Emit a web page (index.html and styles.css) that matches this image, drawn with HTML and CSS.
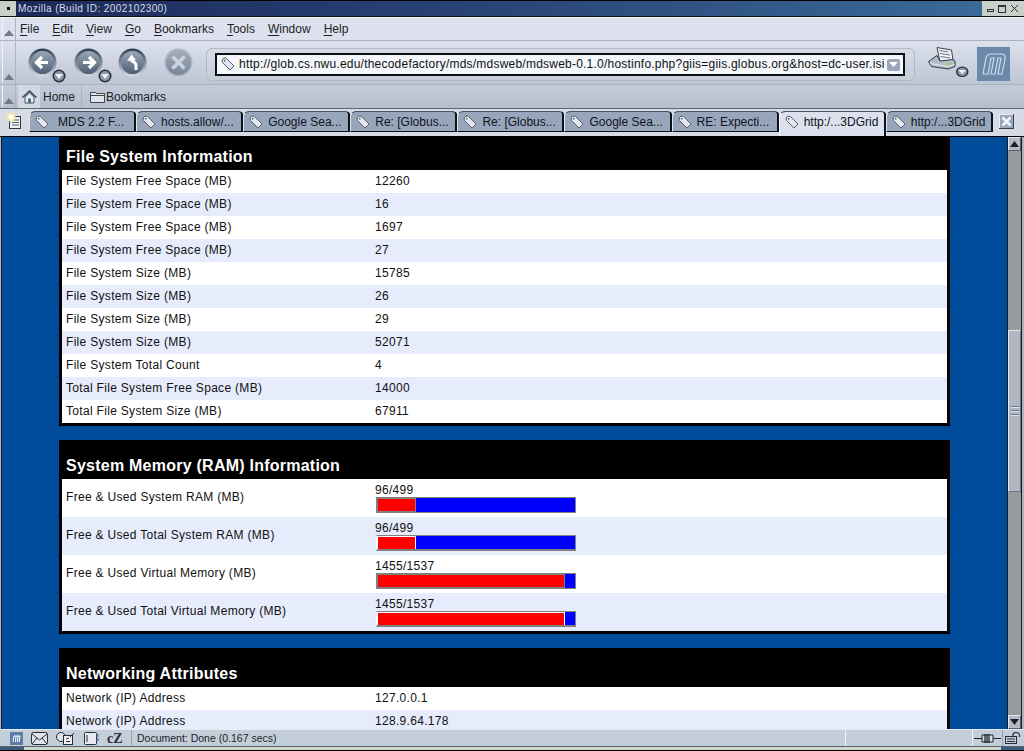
FILE: index.html
```html
<!DOCTYPE html>
<html lang="en">
<head>
<meta charset="utf-8">
<title>Mozilla (Build ID: 2002102300)</title>
<link rel="stylesheet" href="styles.css">
</head>
<body>
<svg class="defs" width="0" height="0" aria-hidden="true">
  <defs>
    <linearGradient id="ball" x1="0" y1="0" x2="0" y2="1"><stop offset="0" stop-color="#9aa7b8"/><stop offset="1" stop-color="#4e5e74"/></linearGradient>
    <linearGradient id="ballRim" x1="0" y1="0" x2="0" y2="1"><stop offset="0" stop-color="#2f3c50"/><stop offset="1" stop-color="#d5dbe5"/></linearGradient>
    <linearGradient id="stopBall" x1="0" y1="0" x2="0" y2="1"><stop offset="0" stop-color="#a3aebd"/><stop offset="1" stop-color="#77869a"/></linearGradient>
    <symbol id="tag" viewBox="0 0 14 14"><path d="M1 3 3 1 5.500 1.500 13 9 9 13 1.500 5.500Z" fill="#e4e7ee" stroke="#59606c"/><circle cx="3.700" cy="3.700" r=".9" fill="#59606c"/></symbol>
    <symbol id="drop" viewBox="0 0 14 14"><circle cx="7" cy="7" r="6.500" fill="#29303c"/><circle cx="7" cy="7" r="5" fill="#8b97a8"/><path d="M3 5h8L7 10Z" fill="#eef1f6"/></symbol>
    <symbol id="grip" viewBox="0 0 10 6"><path d="M0 6 5 0 10 6Z" fill="#6f7a8a"/></symbol>
  </defs>
</svg>
<div class="window">
  <header class="titlebar">
    <div class="winmenu"><span class="winmenu-dot"></span></div>
    <div class="title">Mozilla (Build ID: 2002102300)</div>
    <div class="winbtns">
      <span class="wb-min"></span><span class="wb-max"></span>
      <svg class="wb-x" width="9" height="9" viewBox="0 0 9 9"><path d="M1 1 8 8M8 1 1 8" stroke="#2c3340" fill="none"/></svg>
    </div>
  </header>

  <nav class="menubar">
    <div class="grip"><svg width="10" height="6"><use href="#grip"/></svg></div>
    <span class="menu"><u>F</u>ile</span>
    <span class="menu"><u>E</u>dit</span>
    <span class="menu"><u>V</u>iew</span>
    <span class="menu"><u>G</u>o</span>
    <span class="menu"><u>B</u>ookmarks</span>
    <span class="menu"><u>T</u>ools</span>
    <span class="menu"><u>W</u>indow</span>
    <span class="menu"><u>H</u>elp</span>
  </nav>

  <div class="navbar">
    <div class="grip"><svg width="10" height="6"><use href="#grip"/></svg></div>
    <div class="navbtns">
      <div class="navbtn">
        <svg width="29" height="29" viewBox="0 0 29 29"><circle cx="14.500" cy="14.500" r="14" fill="url(#ballRim)"/><circle cx="14.500" cy="14.500" r="11.500" fill="url(#ball)"/><path d="M20 14.500H10M14 9 8.500 14.500 14 20" stroke="#fff" stroke-width="3.200" fill="none"/></svg>
        <svg class="dropmark" width="14" height="14"><use href="#drop"/></svg>
      </div>
      <div class="navbtn">
        <svg width="29" height="29" viewBox="0 0 29 29"><circle cx="14.500" cy="14.500" r="14" fill="url(#ballRim)"/><circle cx="14.500" cy="14.500" r="11.500" fill="url(#ball)"/><path d="M9 14.500H19M15 9 20.500 14.500 15 20" stroke="#fff" stroke-width="3.200" fill="none"/></svg>
        <svg class="dropmark" width="14" height="14"><use href="#drop"/></svg>
      </div>
      <div class="navbtn navbtn-plain">
        <svg width="29" height="29" viewBox="0 0 29 29"><circle cx="14.500" cy="14.500" r="14" fill="url(#ballRim)"/><circle cx="14.500" cy="14.500" r="11.500" fill="url(#ball)"/><path d="M18 22V17.500Q18 14.500 14 13V11" stroke="#fff" stroke-width="3" fill="none"/><path d="M9 13 13.500 6.500 18 12Z" fill="#fff"/></svg>
      </div>
      <div class="navbtn navbtn-plain">
        <svg width="29" height="29" viewBox="0 0 29 29"><circle cx="14.500" cy="14.500" r="14" fill="#adb6c4"/><circle cx="14.500" cy="14.500" r="12.500" fill="url(#stopBall)"/><path d="M8.500 8.500 20.500 20.500M20.500 8.500 8.500 20.500" stroke="#cdd3dd" stroke-width="3.800"/></svg>
      </div>
    </div>
    <div class="urlframe">
      <div class="urlbox">
        <svg class="urlicon" width="14" height="14"><use href="#tag"/></svg>
        <span class="urltext">http://glob.cs.nwu.edu/thecodefactory/mds/mdsweb/mdsweb-0.1.0/hostinfo.php?giis=giis.globus.org&amp;host=dc-user.isi</span>
        <span class="urldrop"><svg width="9" height="5" viewBox="0 0 9 5"><path d="M0 0H9L4.500 5Z" fill="#fff"/></svg></span>
      </div>
    </div>
    <div class="printbtn">
      <svg width="42" height="32" viewBox="0 0 42 32"><path d="M10 1.500 24.500 4 26 14 13 16Z" fill="#f2f4f7" stroke="#39414e"/><path d="M12.500 4.500 21.500 6M13 7.500 23 9M13.500 10.500 23.500 12" stroke="#6d7685"/><path d="M1.500 15.500 10 9.500 13 15 26 13.500 28 15 28 20.500 21 23 4.500 20.500Z" fill="#b4bcc9" stroke="#303845"/><path d="M3 17.500 21 20.500 27.500 18.500" fill="none" stroke="#e8ebf1"/><path d="M20 17.500 25 16.500 25 18.500 20 19.500Z" fill="#8fcf6d"/><svg x="28.500" y="20" width="13.500" height="11.500" viewBox="0 0 14 14" preserveAspectRatio="none"><circle cx="7" cy="7" r="6.500" fill="#29303c"/><circle cx="7" cy="7" r="5" fill="#8b97a8"/><path d="M3 5h8L7 10Z" fill="#eef1f6"/></svg></svg>
    </div>
    <div class="mlogo">
      <svg width="33" height="34" viewBox="0 0 33 34"><rect width="33" height="34" fill="#6d89aa"/><path d="M6 27 9 11Q10 7 14 7H24Q29 7 28 12L25 27H21L24 11H21L18 27H14L17 11H14L11 27Z" fill="none" stroke="#c6dcef" stroke-width="1.200"/></svg>
    </div>
  </div>

  <div class="personal">
    <div class="grip"><svg width="10" height="6"><use href="#grip"/></svg></div>
    <div class="pbtn pbtn-home">
      <svg width="15" height="14" viewBox="0 0 15 14"><path d="M.5 7.500 7.500 1 14.500 7.500" fill="none" stroke="#39465a" stroke-width="1.500"/><path d="M3 7 7.500 3 12 7V13H3Z" fill="#e8ebf1" stroke="#46536a"/><rect x="6" y="8.500" width="3" height="4.500" fill="#4f7486"/></svg>
      <span>Home</span>
    </div>
    <div class="pbtn pbtn-marks">
      <svg width="15" height="13" viewBox="0 0 15 13"><path d="M.5 2.500H5.500L6.500 3.500H14.500V12.500H.5Z" fill="#dfe3ea" stroke="#3f4654"/><path d="M.5 5.500H14.500" stroke="#3f4654"/></svg>
      <span>Bookmarks</span>
    </div>
  </div>

  <div class="tabbar">
    <div class="newtab">
      <svg width="18" height="18" viewBox="0 0 18 18"><rect x="4.500" y="4.500" width="11" height="12" fill="#eef0f4" stroke="#2f3642"/><path d="M7 8h7M7 10.500h7M7 13h7" stroke="#59606c"/><circle cx="6" cy="5" r="4.500" fill="#f4e79c"/><circle cx="6" cy="5" r="2.500" fill="#fff"/></svg>
    </div>
    <div class="tabs">
      <div class="tab"><svg width="14" height="14"><use href="#tag"/></svg><span class="tablabel-wide">MDS 2.2 F...</span></div>
      <div class="tab"><svg width="14" height="14"><use href="#tag"/></svg><span>hosts.allow/...</span></div>
      <div class="tab"><svg width="14" height="14"><use href="#tag"/></svg><span>Google Sea...</span></div>
      <div class="tab"><svg width="14" height="14"><use href="#tag"/></svg><span>Re: [Globus...</span></div>
      <div class="tab"><svg width="14" height="14"><use href="#tag"/></svg><span>Re: [Globus...</span></div>
      <div class="tab"><svg width="14" height="14"><use href="#tag"/></svg><span>Google Sea...</span></div>
      <div class="tab"><svg width="14" height="14"><use href="#tag"/></svg><span>RE: Expecti...</span></div>
      <div class="tab tab-active"><svg width="14" height="14"><use href="#tag"/></svg><span>http:/...3DGrid</span></div>
      <div class="tab"><svg width="14" height="14"><use href="#tag"/></svg><span>http:/...3DGrid</span></div>
    </div>
    <div class="tabclose">
      <svg width="15" height="15" viewBox="0 0 15 15"><rect width="15" height="15" fill="#98a6bc"/><path d="M0 .5H15M.5 0V15" stroke="#e8ebf1"/><path d="M14.500 0V15M0 14.500H15" stroke="#3c4450"/><path d="M3.500 3.500 11.500 11.500M11.500 3.500 3.500 11.500" stroke="#f2f4f8" stroke-width="2.600"/></svg>
    </div>
  </div>

  <div class="viewport">
    <main class="page">
      <div class="pagecol">
        <section class="panel">
          <h2 class="panel-head">File System Information</h2>
          <div class="row"><div class="k">File System Free Space (MB)</div><div class="v">12260</div></div>
          <div class="row"><div class="k">File System Free Space (MB)</div><div class="v">16</div></div>
          <div class="row"><div class="k">File System Free Space (MB)</div><div class="v">1697</div></div>
          <div class="row"><div class="k">File System Free Space (MB)</div><div class="v">27</div></div>
          <div class="row"><div class="k">File System Size (MB)</div><div class="v">15785</div></div>
          <div class="row"><div class="k">File System Size (MB)</div><div class="v">26</div></div>
          <div class="row"><div class="k">File System Size (MB)</div><div class="v">29</div></div>
          <div class="row"><div class="k">File System Size (MB)</div><div class="v">52071</div></div>
          <div class="row"><div class="k">File System Total Count</div><div class="v">4</div></div>
          <div class="row"><div class="k">Total File System Free Space (MB)</div><div class="v">14000</div></div>
          <div class="row"><div class="k">Total File System Size (MB)</div><div class="v">67911</div></div>
        </section>
        <section class="panel">
          <h2 class="panel-head">System Memory (RAM) Information</h2>
          <div class="row row-bar"><div class="k">Free &amp; Used System RAM (MB)</div><div class="v"><div class="barlabel">96/499</div><div class="bar bar-a"><div class="used" style="width:39px"></div><div class="free"></div></div></div></div>
          <div class="row row-bar"><div class="k">Free &amp; Used Total System RAM (MB)</div><div class="v"><div class="barlabel">96/499</div><div class="bar bar-b"><div class="used" style="width:39px"></div><div class="free"></div></div></div></div>
          <div class="row row-bar"><div class="k">Free &amp; Used Virtual Memory (MB)</div><div class="v"><div class="barlabel">1455/1537</div><div class="bar bar-a"><div class="used" style="width:188px"></div><div class="free"></div></div></div></div>
          <div class="row row-bar"><div class="k">Free &amp; Used Total Virtual Memory (MB)</div><div class="v"><div class="barlabel">1455/1537</div><div class="bar bar-b"><div class="used" style="width:188px"></div><div class="free"></div></div></div></div>
        </section>
        <section class="panel">
          <h2 class="panel-head">Networking Attributes</h2>
          <div class="row"><div class="k">Network (IP) Address</div><div class="v">127.0.0.1</div></div>
          <div class="row"><div class="k">Network (IP) Address</div><div class="v">128.9.64.178</div></div>
        </section>
      </div>
    </main>
    <aside class="scrollbar">
      <div class="sb-arrow"><svg width="9" height="6" viewBox="0 0 9 6"><path d="M0 6H9L4.500 0Z" fill="#1b1f27"/></svg></div>
      <div class="sb-track">
        <div class="sb-thumb"><span></span><span></span><span></span></div>
      </div>
      <div class="sb-arrow"><svg width="9" height="6" viewBox="0 0 9 6"><path d="M0 0H9L4.500 6Z" fill="#1b1f27"/></svg></div>
    </aside>
  </div>

  <footer class="statusbar">
    <div class="st-icons">
      <svg width="13" height="13" viewBox="0 0 13 13"><rect width="13" height="13" fill="#5d7ea6"/><path d="M3 10 4 4H10L9 10M6 4 5.500 10M8 4 7.500 10" stroke="#fff" fill="none"/></svg>
      <svg width="17" height="13" viewBox="0 0 17 13"><rect x=".5" y=".5" width="16" height="12" rx="2" fill="#dfe3ea" stroke="#262c37"/><path d="M1 2 8.500 8 16 2M1 12 6 6M16 12 11 6" stroke="#262c37" fill="none"/></svg>
      <svg width="20" height="13" viewBox="0 0 20 13"><circle cx="5" cy="5" r="4.500" fill="#dfe3ea" stroke="#262c37"/><rect x="7.500" y="3.500" width="9" height="9" fill="#eef0f4" stroke="#262c37"/><path d="M10 7l3-1M10 9.500h4M14 5 18 1" stroke="#262c37"/></svg>
      <svg width="15" height="13" viewBox="0 0 15 13"><rect x=".5" y=".5" width="12" height="12" rx="1" fill="#e6e9ef" stroke="#262c37"/><path d="M13.500 2v3M13.500 6v3" stroke="#5d7ea6" stroke-width="2"/><path d="M3 3v7" stroke="#262c37"/></svg>
      <span class="cz">cZ</span>
    </div>
    <div class="st-text">Document: Done (0.167 secs)</div>
    <div class="st-progress"></div>
    <div class="st-online"><svg width="27" height="11" viewBox="0 0 27 11"><path d="M0 5.500H8M19 5.500H27" stroke="#1f242d"/><path d="M8 2H19V9H8Z" fill="#d8dde6" stroke="#1f242d"/><path d="M11 1V10M13 1V10M15 1V10" stroke="#1f242d" stroke-width="1.300"/></svg></div>
    <div class="st-lock"><svg width="17" height="12" viewBox="0 0 17 12"><rect x=".5" y="4.500" width="11" height="7" fill="#c4cdd9" stroke="#262c37"/><path d="M2 7H10M2 9.500H10" stroke="#262c37"/><path d="M8 4V3Q8 .5 11 .5T14.500 3V5" fill="none" stroke="#262c37" stroke-width="1.200"/></svg></div>
  </footer>
  <div class="taskstrip"><span class="task-a"></span><span class="task-b"></span><span class="task-c"></span></div>
</div>
</body>
</html>
```
FILE: styles.css
```css
* { box-sizing: border-box; }
html, body { margin: 0; padding: 0; background: #000; overflow: hidden; }
body { font-family: "Liberation Sans", Arial, sans-serif; font-size: 12px; color: #111; }
.defs { position: absolute; }
.window { width: 1024px; height: 751px; display: flex; flex-direction: column; background: #000; overflow: hidden; }

.titlebar { height: 16px; margin-top: 1px; display: flex; align-items: stretch; background: #c9cfc9; border-bottom: 1px solid #111; flex: none; }
.winmenu { width: 16px; background: #c8cec8; display: flex; align-items: center; justify-content: center; }
.winmenu-dot { width: 3px; height: 3px; background: #111; }
.title { flex: 1; background: linear-gradient(90deg, #1c2a5a 0%, #2a4578 50%, #3a6a97 100%); color: #d9dde4; font-size: 10px; letter-spacing: .42px; padding-left: 2px; line-height: 15px; }
.winbtns { width: 42px; display: flex; align-items: center; gap: 4px; padding-left: 5px; flex: none; }
.wb-min { width: 7px; height: 3px; border: 1px solid #2c3340; margin-top: 4px; }
.wb-max { width: 8px; height: 8px; border: 1px solid #2c3340; border-top-width: 2px; }

.grip { width: 13px; margin-left: 3px; align-self: stretch; display: flex; align-items: flex-end; padding-bottom: 4px; padding-left: 1px; border-right: 1px solid #aab3c0; box-shadow: -2px 0 0 -1px #f2f4f8; flex: none; }

.menubar { height: 24px; flex: none; display: flex; align-items: center; background: #dde1ee; border-top: 1px solid #f2f4fa; border-bottom: 1px solid #a9b2bf; padding-right: 3px; }
.menubar .grip { margin-right: 4px; }
.menu { margin-right: 13px; font-size: 12px; color: #1b1f27; }
.menu u { text-decoration-thickness: 1px; text-underline-offset: 2px; }

.navbar { height: 44px; flex: none; display: flex; align-items: center; background: linear-gradient(#dde1ee, #bdc6d3); border-bottom: 1px solid #a9b2bf; }
.navbar .grip { margin-right: 12px; }
.navbtns { display: flex; gap: 17px; width: 178px; flex: none; }
.navbtn { width: 29px; height: 29px; position: relative; flex: none; }
.navbtn-plain { margin-left: -2px; margin-right: 2px; }
.dropmark { position: absolute; left: 24px; top: 21px; }
.urlframe { width: 709px; height: 33px; flex: none; margin-top: 3px; border: 1px solid #b0b9c6; border-radius: 6px; display: flex; align-items: center; padding-left: 8px; background: linear-gradient(#d6dbe7, #c5cdd9); }
.urlbox { width: 690px; height: 23px; border: 2px solid #0c1016; background: #f3f7fb; display: flex; align-items: center; }
.urlicon { flex: none; margin: 0 4px 0 4px; }
.urltext { flex: 1; overflow: hidden; white-space: nowrap; font-size: 12px; letter-spacing: .22px; color: #111; }
.urldrop { flex: none; width: 13px; height: 12px; margin: 1px 3px 0 1px; border-radius: 2px; background: #9aa7bb; display: flex; align-items: center; justify-content: center; }
.printbtn { width: 42px; height: 32px; flex: none; margin-left: 12px; margin-top: -1px; }
.mlogo { width: 33px; height: 34px; flex: none; margin-left: 8px; margin-top: 3px; }

.personal { height: 24px; flex: none; display: flex; align-items: center; background: linear-gradient(#c3cbd7, #b5bfcc); border-bottom: 1px solid #5d6675; }
.pbtn { display: flex; align-items: center; gap: 6px; font-size: 12px; color: #1b1f27; }
.pbtn-home { padding: 0 6px 0 4px; height: 23px; border-right: 1px solid #a9b2bf; margin-left: 2px; background: linear-gradient(90deg, #d3d9e3 0, #d3d9e3 22px, transparent 22px); }
.pbtn-marks { gap: 1px; margin-left: 8px; }

.tabbar { height: 27px; flex: none; display: flex; align-items: flex-start; background: #d6dbe6; }
.newtab { width: 29px; height: 22px; flex: none; padding: 3px 0 0 5px; }
.tabs { display: grid; grid-template-columns: repeat(9, 107.100px); flex: none; margin-top: 2px; }
.tab { height: 21px; background: #98a6bc; border: 1px solid #0d1118; border-left-color: #e2e6ee; border-top-color: #4a5361; border-radius: 7px 5px 0 0 / 5px 3px 0 0; border-right-width: 2px; display: flex; align-items: center; gap: 5px; padding-left: 5px; white-space: nowrap; color: #10141b; font-size: 12px; overflow: hidden; }
.tab svg { flex: none; }
.tablabel-wide { margin-left: 4px; }
.tab-active { background: #dde1ee; border-bottom: 0; border-left-color: #fff; height: 25px; padding-bottom: 4px; }
.tabclose { width: 15px; height: 15px; flex: none; margin: 5px 0 0 6px; }

.viewport { flex: none; height: 592px; margin-top: 1px; display: flex; background: #004c9b; border-left: 1px solid #aeb4bd; border-right: 2px solid #aeb4bd; overflow: hidden; }
.page { flex: 1; overflow: hidden; border-left: 1px solid #1a1d24; }
.pagecol { width: 891px; margin-left: 57px; margin-top: -6px; display: flex; flex-direction: column; gap: 14px; }
.panel { background: #000; padding: 0 3px 3px 3px; }
.panel-head { margin: 0; height: 39px; padding: 15px 0 0 4px; color: #fff; font-size: 16px; font-weight: bold; line-height: 22px; letter-spacing: .24px; }
.row { display: flex; height: 23px; align-items: center; background: #fff; color: #111; font-size: 12px; letter-spacing: .31px; padding: 0 0 2px 4px; }
.row:nth-child(odd) { background: #e6ecfc; }
.row-bar { height: 38px; padding-bottom: 0; }
.k { width: 309px; flex: none; }
.v { flex: 1; }
.row-bar .k { position: relative; top: -1px; }
.barlabel { line-height: 13px; margin-top: 1px; }
.bar { width: 200px; height: 16px; display: flex; border: 1px solid #808080; margin-left: 1px; }
.bar .used { border: 1px solid #808080; background: #f00; }
.bar .free { flex: 1; background: #00f; }
.bar-b { border-left-color: #fff; border-bottom-width: 2px; }
.bar-b .used { border-color: #fff; border-bottom-width: 0; }

.scrollbar { width: 15px; flex: none; display: flex; flex-direction: column; background: #999a9e; border-left: 1px solid #1a1d24; border-right: 1px solid #1a1d24; }
.sb-arrow { height: 14px; flex: none; background: #b4bac6; border: 1px solid #e4e7ee; border-right-color: #59606c; border-bottom-color: #59606c; display: flex; align-items: center; justify-content: center; }
.sb-track { flex: 1; padding-top: 179px; }
.sb-thumb { height: 162px; background: #b0b6c2; border: 1px solid #e4e7ee; border-right-color: #6c7480; border-bottom-color: #6c7480; display: flex; flex-direction: column; justify-content: center; align-items: center; gap: 2px; }
.sb-thumb span { width: 8px; height: 2px; background: #66768a; border-bottom: 1px solid #dfe3ea; }

.statusbar { height: 18px; flex: none; display: flex; align-items: stretch; background: #c4ced9; border-top: 1px solid #e6e9f0; border-bottom: 1px solid #5a6270; color: #1b1f27; }
.st-icons { width: 132px; display: flex; align-items: center; gap: 8px; padding-left: 10px; border-right: 1px solid #97a1ae; flex: none; }
.cz { font-family: "Liberation Serif", serif; font-weight: bold; font-size: 14px; line-height: 13px; color: #262c37; }
.st-text { width: 713px; padding-left: 5px; line-height: 16px; font-size: 10.500px; flex: none; white-space: nowrap; }
.st-progress { flex: 1; border-left: 1px solid #eef1f5; border-right: 1px solid #eef1f5; }
.st-online { width: 29px; display: flex; align-items: center; justify-content: center; flex: none; }
.st-lock { width: 22px; display: flex; align-items: center; justify-content: center; flex: none; border-left: 1px solid #97a1ae; }

.taskstrip { height: 4px; flex: none; display: flex; padding-bottom: 1px; background: #000; }
.task-a { width: 24px; background: #3f5a7d; }
.task-b { flex: 1; background: #cfd6cc; }
.task-c { width: 23px; background: #3f5a7d; }
```
